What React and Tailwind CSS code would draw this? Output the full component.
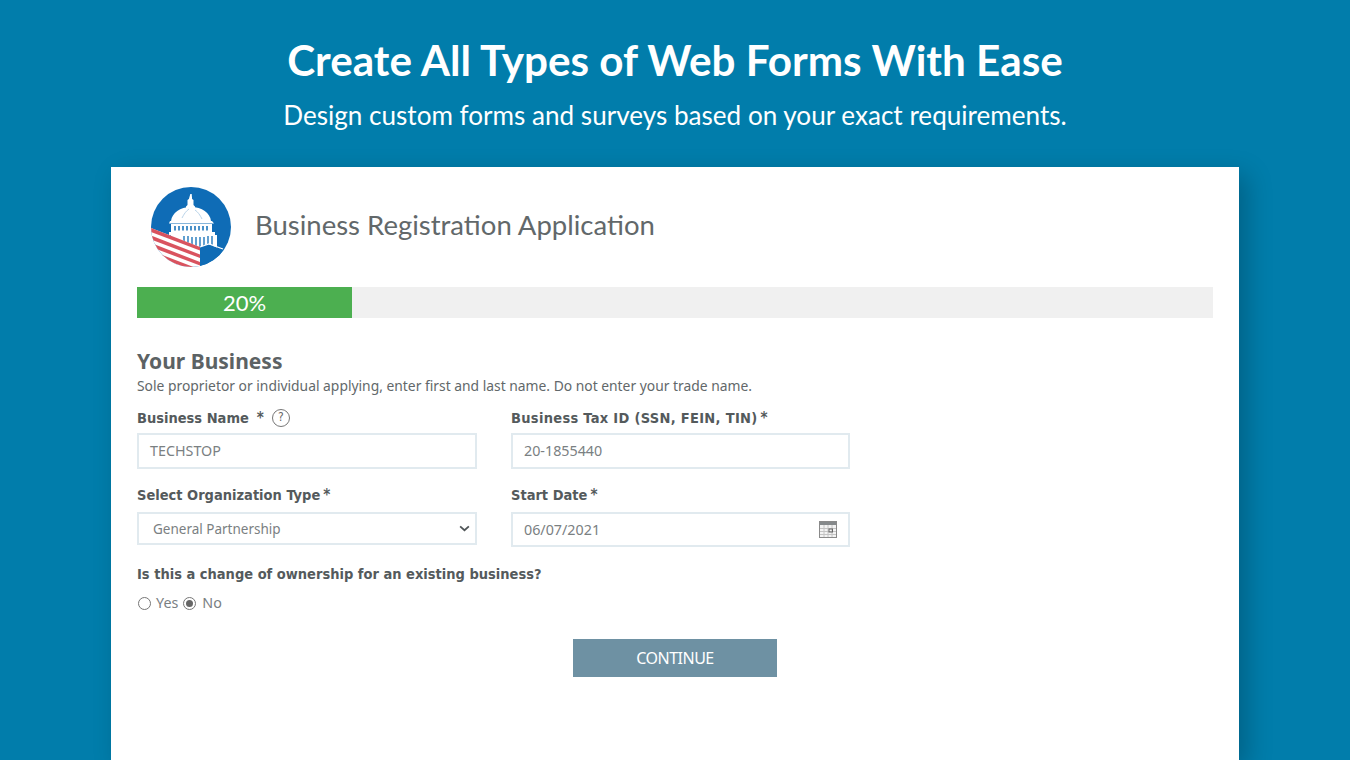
const FORM_FONT = 'font-["Noto_Sans",sans-serif]'

function Logo() {
  return (
    <svg viewBox="0 0 80 80" className="w-20 h-20 shrink-0">
      <defs>
        <clipPath id="disc"><circle cx="40" cy="40" r="40" /></clipPath>
      </defs>
      <g clipPath="url(#disc)">
        <rect width="80" height="80" fill="#0f6cb6" />
        {/* lantern and dome */}
        <path d="M39.300 7h1.400l.4 5 1.400 1v5l1.500 1.500v1.500h-9v-1.500l1.500-1.500v-5l1.400-1z" fill="#fff" />
        <path d="M20 34c1-8 9-14 20-14s19 6 20 14z" fill="#fff" />
        <path d="M31 31c2-4 4-7 7-9M51 32c-2-4-4-7-7-9" stroke="#b9d3e8" strokeWidth="1" fill="none" />
        <path d="M19 34h42l2 2.500H18z" fill="#fff" />
        {/* colonnade */}
        <rect x="20" y="37" width="41" height="8" fill="#fff" />
        <path d="M24 39v4.500M28 39v4.500M32 39v4.500M36 39v4.500M40 39v4.500M44 39v4.500M48 39v4.500M52 39v4.500M56 39v4.500" stroke="#0f6cb6" strokeWidth="1.500" />
        <path d="M18 45h46v3H18z" fill="#fff" />
        <rect x="20" y="48" width="46" height="13" fill="#fff" />
        <path d="M33 49v10M37 49v11M41 50v11M45 50v11M49 50v11M53 50v9M57 49v10M61 49v10" stroke="#0f6cb6" strokeWidth="1.300" />
        {/* wing and roof line */}
        <path d="M49 80V60l8-3 23 9v14z" fill="#0f6cb6" />
        <path d="M49 60l9-3 14 5" stroke="#fff" strokeWidth="1.200" fill="none" />
        {/* striped flag */}
        <path d="M0 41l49 19v20H0z" fill="#fff" />
        <path d="M0 41l49 19v3.500L0 45z" fill="#d9535f" />
        <path d="M0 48.500l49 19v3.500L0 52.500z" fill="#d9535f" />
        <path d="M0 56l49 19v3.500L0 60z" fill="#d9535f" />
        <path d="M0 63.500l49 19v3.500L0 67.500z" fill="#d9535f" />
      </g>
    </svg>
  )
}

function Label({ children, className = '' }) {
  return <div className={`font-["DejaVu_Sans",sans-serif] [font-stretch:condensed] text-[14.500px] leading-5 font-bold text-[#545a5c] ${className}`}>{children}</div>
}

function Field({ value, children }) {
  return (
    <div className="h-full w-full border-2 border-[#e1eaef] flex items-center justify-between pl-[11px] pr-[18px] text-[14.300px] text-[#7a8082]">
      <span>{value}</span>
      {children}
    </div>
  )
}

function CalendarIcon() {
  return (
    <svg viewBox="0 0 18 17" className="w-[18px] h-[17px]">
      <rect x="0.500" y="0.500" width="17" height="16" fill="#f3f3f3" stroke="#8a8a8a" />
      <rect x="1" y="1" width="16" height="3" fill="#85898b" />
      <path d="M1 7.500h16M1 10.500h16M1 13.500h16M5 4v12M9 4v12M13 4v12" stroke="#c4c4c4" strokeWidth="1" />
      <rect x="10" y="8" width="3.500" height="3" fill="none" stroke="#666" />
    </svg>
  )
}

export default function App() {
  return (
    <div className="h-[760px] overflow-hidden bg-[#017dab] flex flex-col items-center">
      {/* Banner */}
      <h1 className='mt-[34px] text-[42.200px] leading-[52px] font-bold text-white font-["Lato",sans-serif]'>
        Create All Types of Web Forms With Ease
      </h1>
      <p className='mt-[10px] text-[26.100px] leading-[38px] text-white font-["Lato",sans-serif]'>
        Design custom forms and surveys based on your exact requirements.
      </p>

      {/* Form card */}
      <div className={`mt-[33px] w-[1128px] flex-1 bg-white px-[26px] pt-5 shadow-[8px_8px_24px_rgba(0,0,0,0.22)] ${FORM_FONT}`}>
        <div className="flex items-center pl-[14px] gap-6">
          <Logo />
          <div className='text-[27.500px] leading-10 text-[#62686a] font-["Lato",sans-serif] -mt-[4px]'>Business Registration Application</div>
        </div>

        <div className="mt-5 h-[31px] bg-[#f0f0f0]">
          <div className='h-full w-[215px] bg-[#4caf50] text-white text-[22px] leading-[31px] text-center font-["Lato",sans-serif]'>20%</div>
        </div>

        <div className="mt-[30px] text-[21px] leading-[26px] font-bold text-[#5c6264]">Your Business</div>
        <div className="mt-[2px] text-[13.850px] leading-[20px] text-[#62686a]">
          Sole proprietor or individual applying, enter first and last name. Do not enter your trade name.
        </div>

        <div className="mt-[8px] grid grid-cols-[340px_339px] gap-x-[34px]">
          <div>
            <Label className="h-[28px] flex items-center gap-[8px]">
              Business Name <span className="text-[15px]">*</span>
              <span className="w-[18px] h-[18px] rounded-full border-[1.500px] border-[#777] text-[12px] leading-[15px] text-center font-normal text-[#666]">?</span>
            </Label>
            <div className="mt-px h-9"><Field value="TECHSTOP" /></div>
          </div>
          <div>
            <Label className="h-[28px] flex items-center gap-[3px] tracking-[0.3px]">
              Business Tax ID (SSN, FEIN, TIN) <span className="text-[15px]">*</span>
            </Label>
            <div className="mt-px h-9"><Field value="20-1855440" /></div>
          </div>

          <div className="mt-[16px]">
            <Label className="flex items-center gap-[3px]">Select Organization Type <span className="text-[15px]">*</span></Label>
            <div className="mt-[7px] h-[33px] border-2 border-[#e1eaef] flex items-center justify-between pl-[14px] pr-[5px] text-[13.500px] text-[#7a8082]">
              <span className="pt-px">General Partnership</span>
              <svg viewBox="0 0 12 8" className="w-[11px] h-[7px]" fill="none" stroke="#4f5557" strokeWidth="2"><path d="M1 1.500l5 4.500 5-4.500" /></svg>
            </div>
          </div>
          <div className="mt-[16px]">
            <Label className="flex items-center gap-[3px]">Start Date <span className="text-[15px]">*</span></Label>
            <div className="mt-[7px] h-[35px]">
              <Field value="06/07/2021"><span className="-mr-[7px] flex"><CalendarIcon /></span></Field>
            </div>
          </div>
        </div>

        <Label className="mt-[17px]">Is this a change of ownership for an existing business?</Label>

        <div className="mt-[9px] ml-px flex items-center text-[14.300px] leading-5 text-[#7a8082]">
          <span className="w-[13px] h-[13px] rounded-full border border-[#767676] bg-white mr-[5px]" />
          <span className="mr-[5px]">Yes</span>
          <span className="w-[13px] h-[13px] rounded-full border border-[#767676] flex items-center justify-center mr-[6px]">
            <span className="w-[7px] h-[7px] rounded-full bg-[#666]" />
          </span>
          <span>No</span>
        </div>

        <div className="mt-[26px] flex justify-center">
          <button className="w-[204px] h-[38px] bg-[#6e91a3] text-white text-[16px] tracking-[-0.5px]">CONTINUE</button>
        </div>
      </div>
    </div>
  )
}
